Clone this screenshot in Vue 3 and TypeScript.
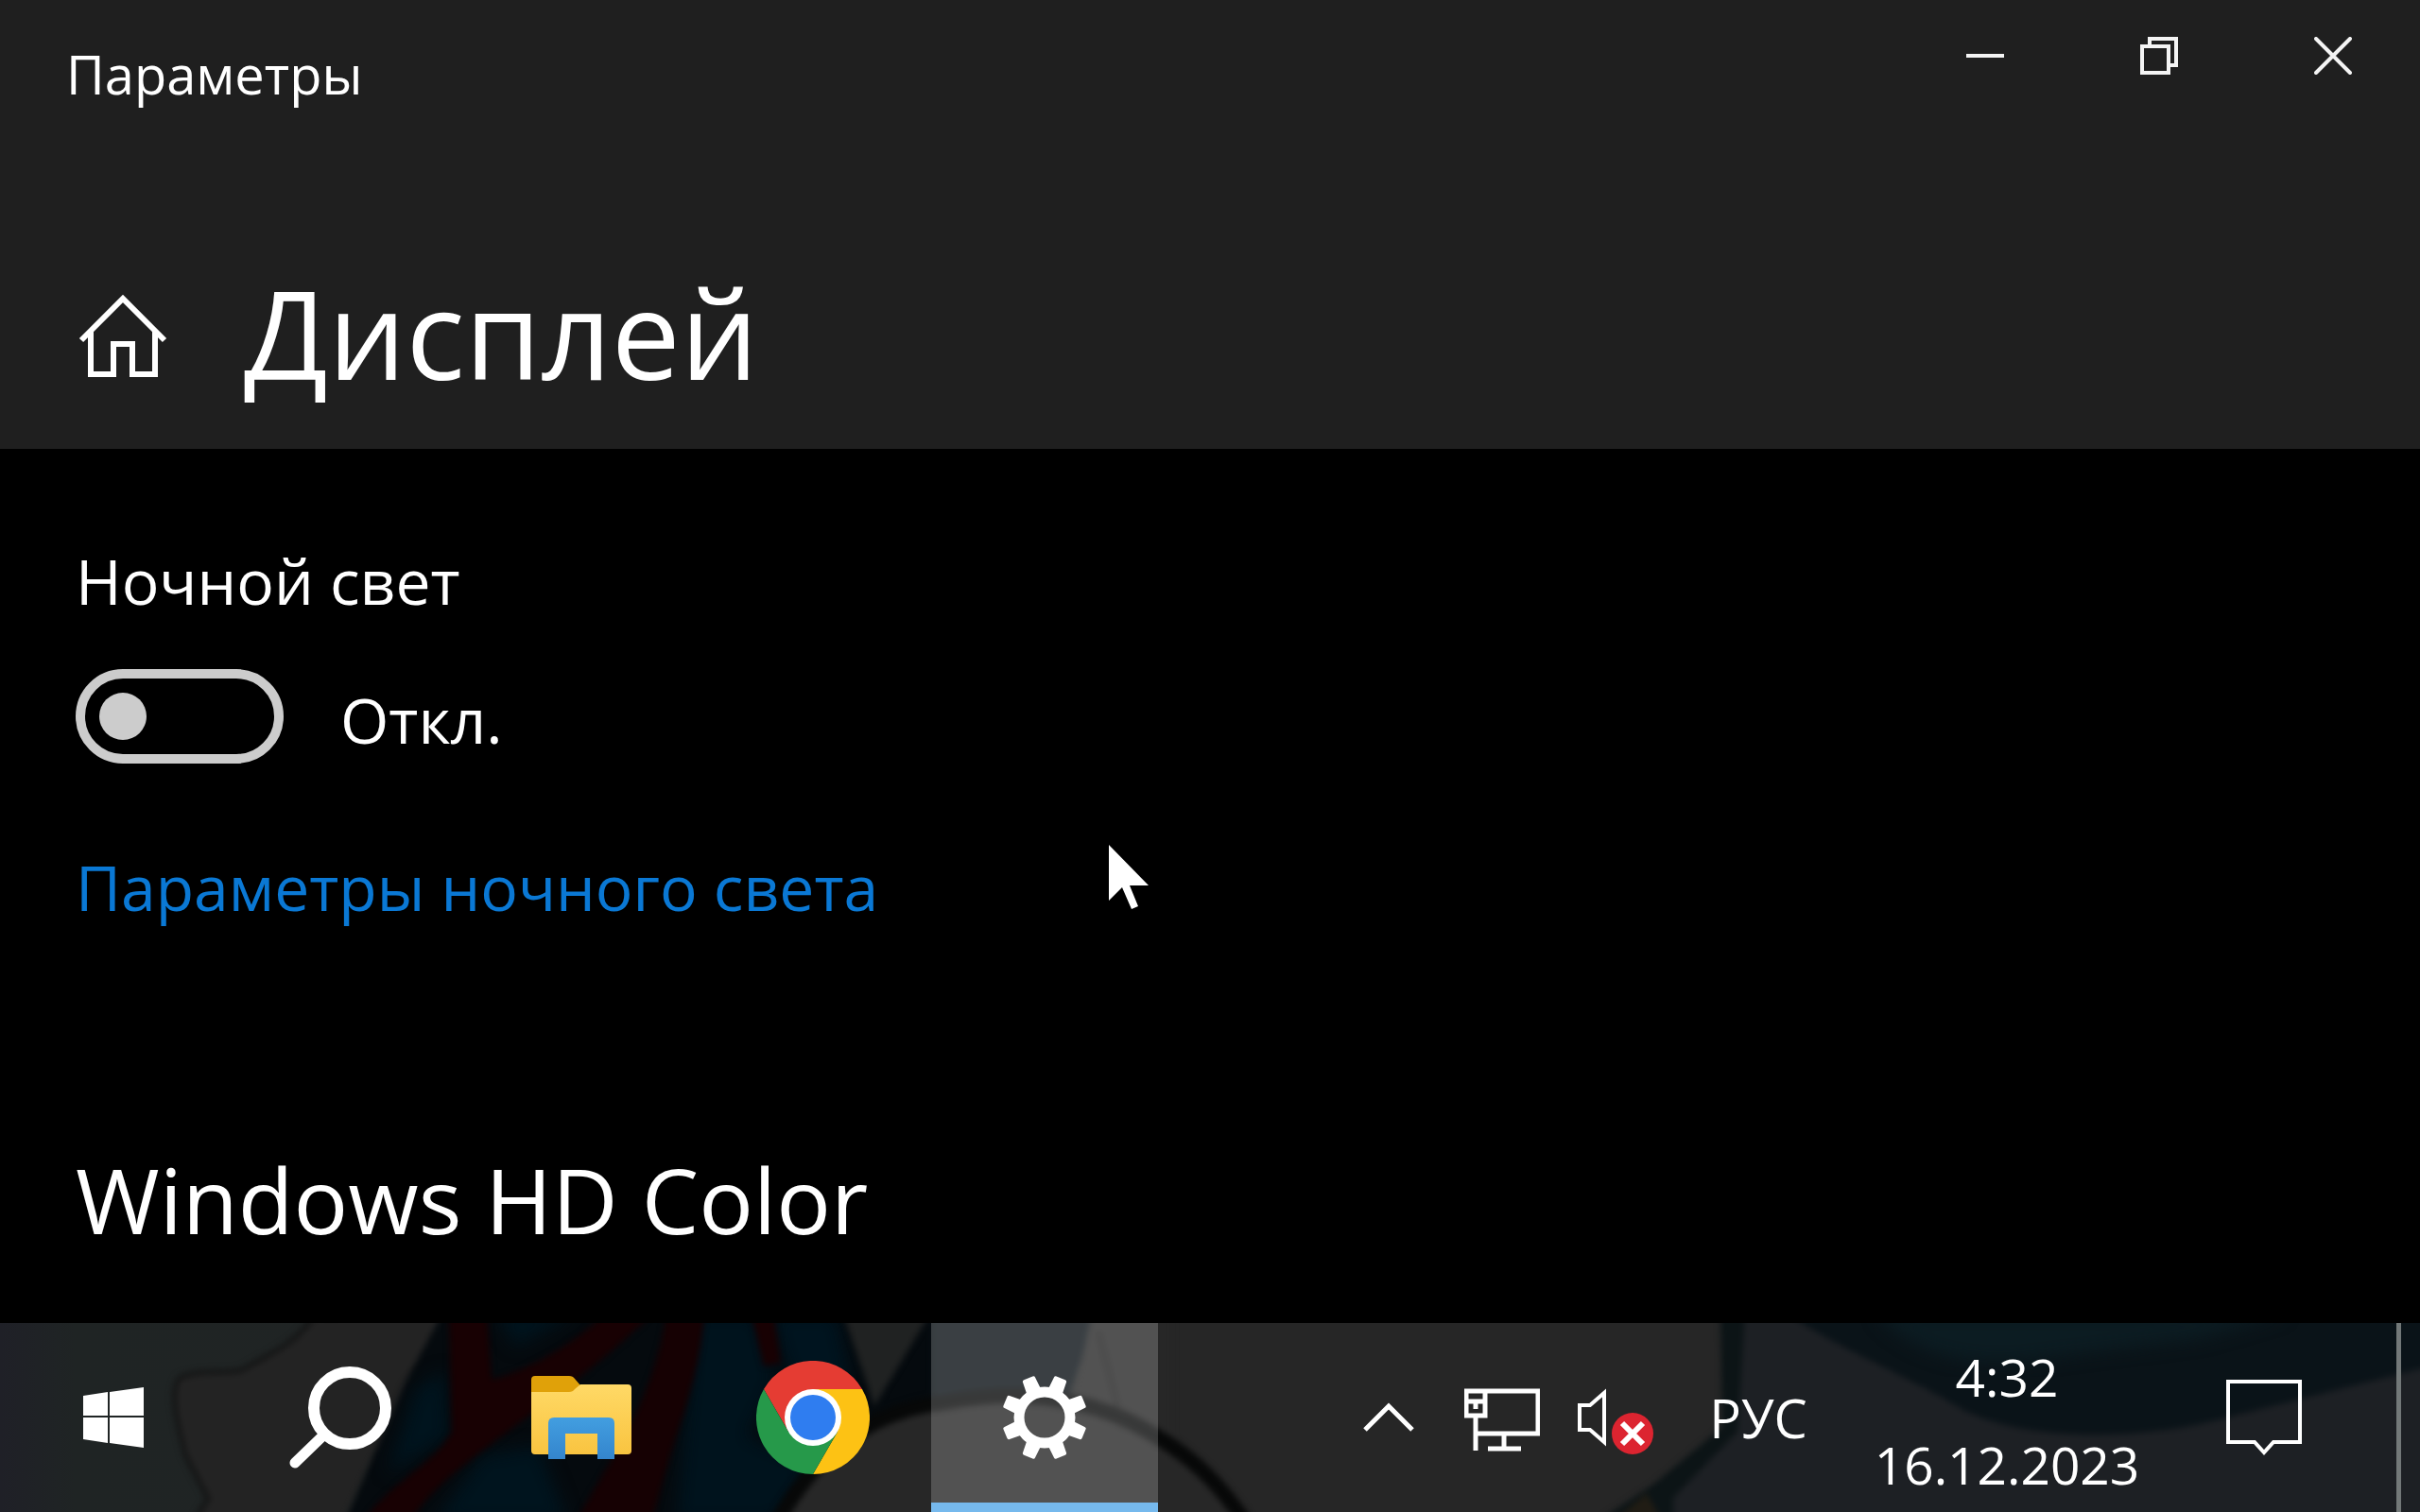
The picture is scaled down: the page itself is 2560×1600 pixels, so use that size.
<script setup lang="ts">
import { computed, ref } from 'vue'

const nightLight = ref<boolean>(false)
const nightLightState = computed<string>(() => (nightLight.value ? 'Вкл.' : 'Откл.'))
const gearTeeth: number[] = [22.5, 67.5, 112.5, 157.5, 202.5, 247.5, 292.5, 337.5]
</script>

<template>
  <div class="screen">
    <header class="header">
      <div class="titlebar">
        <span class="window-title">Параметры</span>
        <div class="caption-buttons">
          <button type="button" aria-label="Свернуть">
            <svg viewBox="0 0 40 40"><path d="M0 20H40" /></svg>
          </button>
          <button type="button" aria-label="Восстановить">
            <svg viewBox="0 0 40 40"><path d="M2 10H30V38H2ZM10 10V2H38V30H30" /></svg>
          </button>
          <button type="button" aria-label="Закрыть">
            <svg viewBox="0 0 40 40"><path d="M2 2L38 38M38 2L2 38" stroke-linecap="round" /></svg>
          </button>
        </div>
      </div>
      <div class="page-head">
        <button type="button" class="home" aria-label="Главная">
          <svg viewBox="0 0 96 96">
            <path d="M4 56L48 12L92 56" />
            <path d="M14 47V92H38V60H58V92H82V47" />
          </svg>
        </button>
        <h1>Дисплей</h1>
      </div>
    </header>

    <main class="content">
      <label class="setting-label" for="night-light">Ночной свет</label>
      <div class="toggle-row">
        <input id="night-light" v-model="nightLight" class="toggle" type="checkbox" role="switch" />
        <span class="toggle-state">{{ nightLightState }}</span>
      </div>
      <a class="link" href="#night-light">Параметры ночного света</a>
      <h2>Windows HD Color</h2>
    </main>

    <footer class="taskbar">
      <svg class="wallpaper" viewBox="0 0 2560 200" preserveAspectRatio="none" aria-hidden="true">
        <defs>
          <filter id="soft" x="-10%" y="-10%" width="120%" height="120%" color-interpolation-filters="sRGB">
            <feGaussianBlur stdDeviation="3" />
          </filter>
          <filter id="softer" x="-30%" y="-30%" width="160%" height="160%" color-interpolation-filters="sRGB">
            <feGaussianBlur stdDeviation="9" />
          </filter>
          <linearGradient id="edge" x1="0" x2="1">
            <stop offset="0" stop-color="#1f2027" />
            <stop offset=".2" stop-color="#1f2424" />
            <stop offset="1" stop-color="#202424" />
          </linearGradient>
        </defs>
        <rect width="2560" height="200" fill="#262626" />
        <rect width="400" height="200" fill="url(#edge)" />
        <g filter="url(#soft)">
          <path d="M465 -10L430 60L365 210H840L1010 80V-10Z" fill="#050a0e" />
          <path d="M326 -5C312 22 290 30 255 50C235 54 212 48 190 58C178 72 188 108 196 140L220 186L208 210H362L430 60L468 -10Z" fill="#232323" />
          <path d="M330 -5C312 22 290 30 255 50C235 54 212 48 190 58C178 72 188 108 196 140L220 186L208 205" fill="none" stroke="#141515" stroke-width="5" />
        </g>
        <g filter="url(#softer)">
          <path d="M525 -10H610L545 25ZM440 70L470 50L475 120L410 160ZM460 210L510 140L570 130L600 210Z" fill="#00141e" />
          <path d="M735 -10H800L820 60L790 120L860 150L820 210H715Z" fill="#00131d" />
          <path d="M815 -10H885L900 60L850 80L830 40Z" fill="#00141f" />
        </g>
        <g filter="url(#soft)">
          <path d="M475 -10H515L520 60C560 50 610 20 640 -10H690C640 40 570 90 530 120C490 150 450 180 435 210H385C410 170 460 150 478 115Z" fill="#180103" />
          <path d="M705 -10H745C740 50 725 90 712 130C700 170 695 190 690 210H610C640 150 690 90 705 -10Z" fill="#160103" />
          <path d="M795 -10H818L826 42L808 46Z" fill="#180103" />
        </g>
        <g filter="url(#soft)">
          <path d="M892 -10H984L925 88Z" fill="#202222" />
          <path d="M986 -10H1160L1130 80L986 95Z" fill="#091015" />
          <path d="M1155 -10H1240V130L1135 80Z" fill="#272727" />
          <path d="M1162 10L1184 95" stroke="#1c1c1c" stroke-width="4" />
          <path d="M820 215C860 140 920 92 1000 84C1080 68 1160 80 1220 118C1262 142 1292 172 1320 215Z" fill="#272727" />
          <path d="M820 215C860 140 920 92 1000 84C1080 68 1160 80 1220 118C1262 142 1292 172 1320 215" fill="none" stroke="#070808" stroke-width="16" />
          <path d="M1820 -10H2570V210H1690L1760 170L1826 115Z" fill="#1d2024" />
          <path d="M1820 -10H1846L1838 115L1770 185V210H1690L1750 170L1822 110Z" fill="#0c1416" />
          <path d="M1706 210L1742 180L1758 210Z" fill="#201c14" />
          <path d="M1890 -10C1950 30 2010 52 2070 88C2130 124 2250 126 2340 104L2570 46V-10Z" fill="#0a1318" />
        </g>
        <path d="M1985 -10C2020 30 2070 45 2140 40L2330 16L2420 -10Z" fill="#0c1c22" filter="url(#softer)" />
      </svg>

      <nav class="launchers">
        <button type="button" class="start" aria-label="Пуск">
          <svg width="64" height="64" viewBox="0 0 64 64" fill="#fff">
            <path d="M0 9L26 5V30H0ZM28 5L64 0V30H28ZM0 32H26V59L0 55ZM28 32H64V64L28 59Z" />
          </svg>
        </button>
        <button type="button" class="search" aria-label="Поиск">
          <svg width="108" height="108" viewBox="0 0 108 108" fill="none" stroke="#fff">
            <circle cx="64" cy="44" r="38" stroke-width="12" />
            <path d="M36 73L6 102" stroke-width="11" stroke-linecap="round" />
          </svg>
        </button>
        <button type="button" class="app" aria-label="Проводник">
          <svg width="106" height="88" viewBox="0 0 106 88">
            <defs>
              <linearGradient id="folder" x1="0" y1="0" x2="0" y2="1">
                <stop offset="0" stop-color="#ffd966" />
                <stop offset="1" stop-color="#f9c440" />
              </linearGradient>
              <linearGradient id="holder" x1="0" y1="0" x2="0" y2="1">
                <stop offset="0" stop-color="#429ee0" />
                <stop offset="1" stop-color="#3485cd" />
              </linearGradient>
            </defs>
            <path d="M0 22V4Q0 0 4 0H40Q44 0 46 3L52 10V22Z" fill="#e0a109" />
            <path d="M0 17H40Q44 17 46 14L52 9H102Q106 9 106 13V79Q106 83 102 83H4Q0 83 0 79Z" fill="url(#folder)" />
            <path d="M18 88V50Q18 44 24 44H82Q88 44 88 50V88H70V61H36V88Z" fill="url(#holder)" />
          </svg>
        </button>
        <button type="button" class="app" aria-label="Google Chrome">
          <svg width="120" height="120" viewBox="-60 -60 120 120">
            <path d="M-52 -30A60 60 0 0 1 52 -30H0L-26 15Z" fill="#e53c33" />
            <path d="M52 -30A60 60 0 0 1 0 60L26 15L0 -30Z" fill="#fdc214" />
            <path d="M0 60A60 60 0 0 1 -52 -30L-26 15H26Z" fill="#26994a" />
            <circle r="30" fill="#fff" />
            <circle r="24" fill="#2f7df0" />
          </svg>
        </button>
        <button type="button" class="app active" aria-label="Параметры">
          <svg width="88" height="88" viewBox="-44 -44 88 88">
            <circle r="27" fill="none" stroke="#fff" stroke-width="11" />
            <path
              v-for="angle in gearTeeth"
              :key="angle"
              d="M-8 -28L-7 -43Q-7 -45 -5 -45H5Q7 -45 7 -43L8 -28Z"
              fill="#fff"
              :transform="`rotate(${angle})`"
            />
          </svg>
        </button>
      </nav>

      <div class="tray">
        <button type="button" class="tray-icon" aria-label="Показать скрытые значки">
          <svg viewBox="0 0 80 80"><path d="M15 53L40 28L65 53" stroke-width="5" /></svg>
        </button>
        <button type="button" class="tray-icon" aria-label="Сеть">
          <svg viewBox="0 0 80 80">
            <path d="M2 12V38H22V12M22 12H78V57H14M12 38V75M0 12H22M2 23H22M12 22V31M42 57V72M25 73H60" stroke-width="5" />
          </svg>
        </button>
        <button type="button" class="tray-icon" aria-label="Звук отключён">
          <svg viewBox="0 0 80 80">
            <path d="M2 27H13L28 14V66L13 53H2Z" stroke-width="4" />
            <circle cx="58" cy="57" r="22" fill="#dc2430" stroke="none" />
            <path d="M47 46L69 68M69 46L47 68" stroke-width="6" />
          </svg>
        </button>
        <button type="button" class="language">РУС</button>
        <button type="button" class="clock">
          <time datetime="04:32">4:32</time>
          <time datetime="2023-12-16">16.12.2023</time>
        </button>
        <button type="button" class="notifications" aria-label="Центр уведомлений">
          <svg viewBox="0 0 80 80"><path d="M2 2H78V66H50L40 77L30 66H2Z" stroke-width="4" /></svg>
        </button>
        <button type="button" class="show-desktop" aria-label="Свернуть все окна"></button>
      </div>
    </footer>

    <svg class="cursor" viewBox="0 0 42 68" aria-hidden="true">
      <path d="M0 0L42 43H22L31 65L24 68L14 45L0 59Z" fill="#fff" />
    </svg>
  </div>
</template>

<style>
body {
  margin: 0;
  background: #000;
}
</style>

<style scoped>
.screen {
  position: relative;
  display: flex;
  flex-direction: column;
  min-height: 100vh;
  overflow: hidden;
  background: #000;
  color: #fff;
  font-family: "Open Sans", "Noto Sans", sans-serif;
}

button {
  display: flex;
  align-items: center;
  justify-content: center;
  padding: 0;
  border: 0;
  background: none;
  color: inherit;
  font: inherit;
}

.header {
  background: #1f1f1f;
}

.titlebar {
  display: flex;
  justify-content: space-between;
  height: 262px;
}

.window-title {
  padding: 38px 0 0 70px;
  font-size: 56px;
  line-height: 80px;
}

.caption-buttons {
  display: flex;
}

.caption-buttons button {
  width: 184px;
  height: 118px;
}

.caption-buttons svg {
  width: 40px;
  height: 40px;
  fill: none;
  stroke: #f4f4f4;
  stroke-width: 4;
}

.page-head {
  display: flex;
  align-items: center;
  gap: 80px;
  padding: 0 80px 33px 82px;
}

.home svg {
  width: 96px;
  height: 96px;
  fill: none;
  stroke: #fff;
  stroke-width: 6;
}

h1 {
  margin: 0;
  font-size: 130px;
  font-weight: 400;
  line-height: 180px;
}

.content {
  display: flex;
  flex: 1;
  flex-direction: column;
  align-items: flex-start;
  padding: 94px 80px 66px;
}

.setting-label,
.toggle-state,
.link {
  font-size: 66px;
  line-height: 90px;
}

.toggle-row {
  display: flex;
  align-items: center;
  gap: 60px;
  margin: 49px 0 85px;
}

.toggle {
  display: flex;
  align-items: center;
  appearance: none;
  box-sizing: border-box;
  width: 220px;
  height: 100px;
  margin: 0;
  padding: 0 15px;
  border: 10px solid #ccc;
  border-radius: 50px;
}

.toggle::before {
  content: "";
  width: 50px;
  height: 50px;
  border-radius: 50%;
  background: #ccc;
}

.toggle:checked {
  justify-content: flex-end;
}

.toggle-state {
  padding-top: 6px;
}

.link {
  color: #0a78d4;
  text-decoration: none;
}

h2 {
  margin: 221px 0 0;
  font-size: 96px;
  font-weight: 400;
  line-height: 130px;
}

.taskbar {
  position: relative;
  display: flex;
  justify-content: space-between;
  height: 200px;
}

.wallpaper {
  position: absolute;
  inset: 0;
  width: 100%;
  height: 100%;
}

.launchers,
.tray {
  position: relative;
  display: flex;
}

.start,
.search,
.app {
  width: 240px;
}

.search {
  margin-right: 10px;
}

.app {
  box-sizing: border-box;
  margin-left: 5px;
}

.active {
  border-top: 10px solid transparent;
  border-bottom: 10px solid #76b9ed;
  background: rgb(255 255 255 / 20%);
}

.tray-icon {
  width: 120px;
}

.tray-icon svg,
.notifications svg {
  width: 80px;
  height: 80px;
  fill: none;
  stroke: #fff;
}

.language {
  width: 182px;
  font-size: 56px;
}

.clock {
  flex-direction: column;
  width: 344px;
  padding-top: 6px;
  font-size: 55px;
  line-height: 93px;
}

.notifications {
  width: 200px;
  margin-right: 40px;
}

.show-desktop {
  width: 25px;
  border-left: 5px solid #727878;
}

.cursor {
  position: absolute;
  top: 894px;
  left: 1173px;
  width: 42px;
  height: 68px;
}
</style>
